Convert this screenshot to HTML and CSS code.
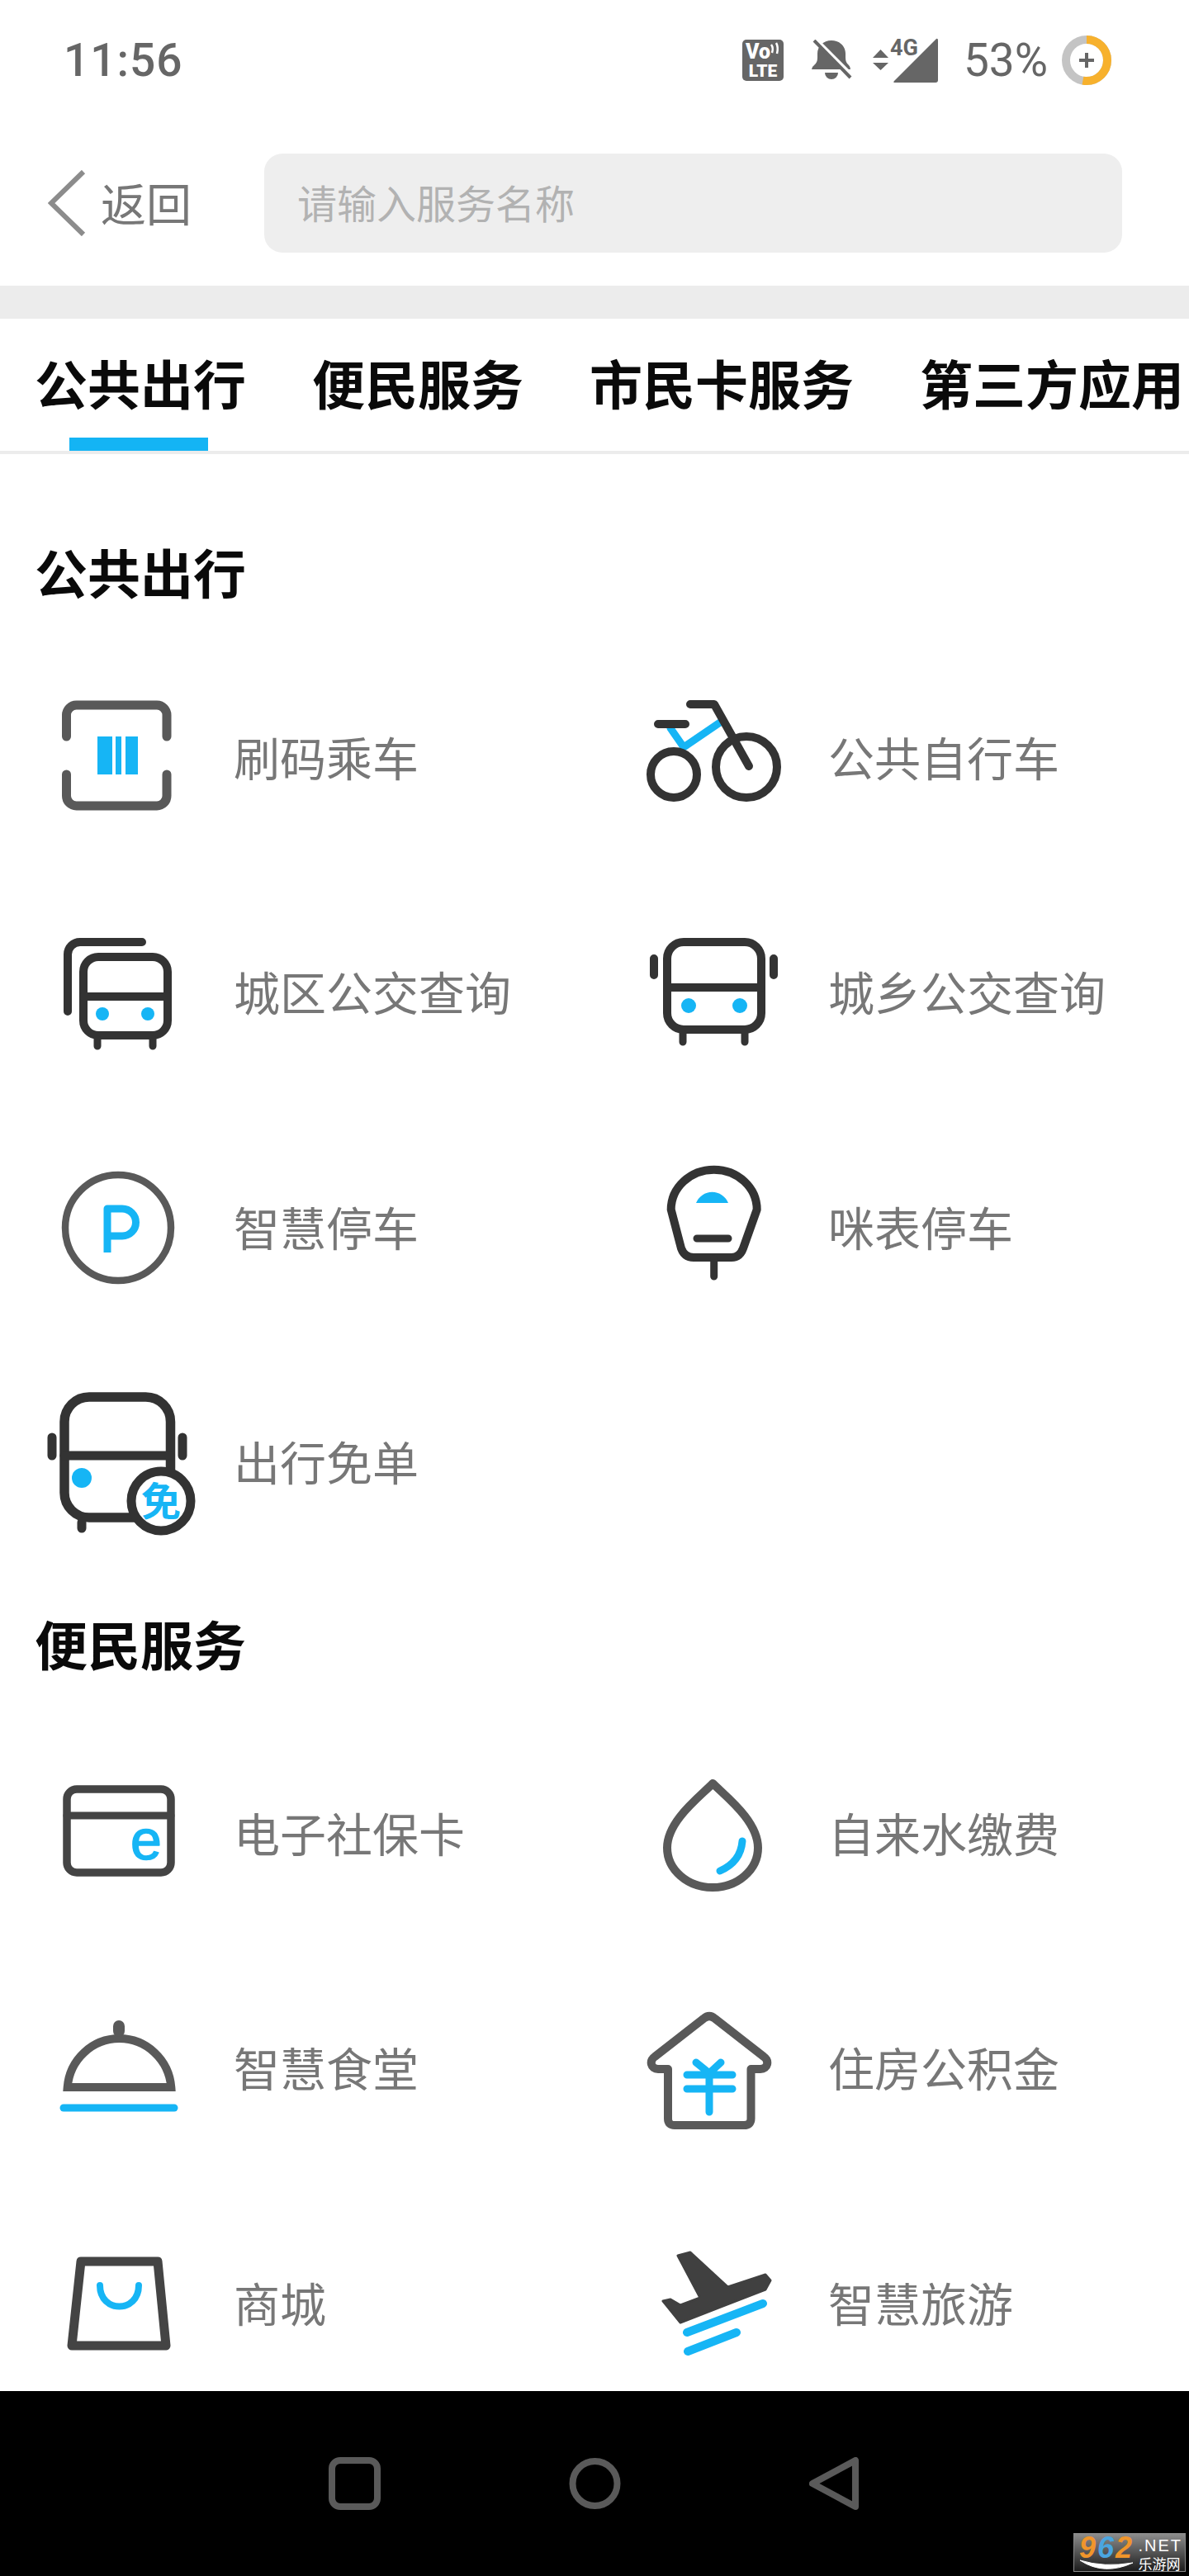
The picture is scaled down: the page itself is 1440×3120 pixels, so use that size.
FILE: index.html
```html
<!DOCTYPE html>
<html lang="zh-CN">
<head>
<meta charset="utf-8">
<title>服务</title>
<link rel="stylesheet" href="styles.css">
</head>
<body>
<div class="phone">
  <div class="status">
    <span class="clock">11:56</span>
    <div class="status-icons">
      <svg class="si-volte" width="50" height="50" viewBox="0 0 50 50"><rect width="50" height="50" rx="5" fill="#666"/><text x="4" y="23" class="volte-v">Vo</text><path d="M35 6q3 4 1 10M41 4q3 5 1 13" fill="none" stroke="#fff" stroke-width="2.500"/><text x="25" y="45" text-anchor="middle" class="volte-l">LTE</text></svg>
      <svg class="si-bell" width="49" height="50" viewBox="0 0 49 50"><path d="M0 36Q0 33 3 31Q7 28 7 22V17C7 8 14 1 24 1C34 1 41 8 41 17V22Q41 28 45 31Q47 33 47 36Z" fill="#666"/><path d="M16 40H32A8 8 0 0 1 16 40Z" fill="#666"/><path d="M7 1L49 43" stroke="#fff" stroke-width="4"/><path d="M3 1L47 46" stroke="#666" stroke-width="4"/></svg>
      <svg class="si-net" width="79" height="64" viewBox="0 -10 79 64"><path d="M9.500 14L19 24H0Z" fill="#666"/><path d="M0 30H19L9.500 39Z" fill="#666"/><text x="21" y="21" class="net-t">4G</text><path d="M77 1Q79 0 79 3V51Q79 54 76 54H27Q24 54 26 52Z" fill="#666"/></svg>
      <span class="pct">53%</span>
      <svg class="si-ring" width="60" height="60" viewBox="0 0 60 60"><circle cx="30" cy="30" r="25" fill="none" stroke="#c4c4c4" stroke-width="10"/><circle cx="30" cy="30" r="25" fill="none" stroke="#f7b12d" stroke-width="10" pathLength="100" stroke-dasharray="53 47" transform="rotate(-90 30 30)"/><path d="M21 30H39M30 21V39" stroke="#666" stroke-width="4"/></svg>
    </div>
  </div>

  <header class="appbar">
    <div class="back">
      <svg width="46" height="80" viewBox="0 0 46 80"><path d="M43 2L4 40L43 78" fill="none" stroke="#8c8c8c" stroke-width="6"/></svg>
      <span class="lift">返回</span>
    </div>
    <div class="search"><span class="lift">请输入服务名称</span></div>
  </header>
  <div class="band"></div>

  <nav class="tabs">
    <span class="tab active">公共出行</span>
    <span class="tab">便民服务</span>
    <span class="tab">市民卡服务</span>
    <span class="tab">第三方应用</span>
  </nav>

  <main class="main">
    <section>
      <h2 class="title">公共出行</h2>
      <div class="grid">
        <div class="item">
          <svg class="ico c5" viewBox="0 0 190 190"><path d="M36.500 70V44a12 12 0 0 1 12-12H146a12 12 0 0 1 12 12V70M36.500 116V142a12 12 0 0 0 12 12H146a12 12 0 0 0 12-12V116" stroke-width="11"/><path class="bf" d="M74 70h18v46H74zM96 70h7v46h-7zM108 70h15v46h-15z"/></svg>
          <span class="lift">刷码乘车</span>
        </div>
        <div class="item">
          <svg class="ico c3" viewBox="0 0 190 190"><path class="bl" d="M48 60L64 83L108 53"/><circle cx="52" cy="116" r="28"/><circle cx="140" cy="107" r="37"/><path d="M72 31H101L143 106M33 55H66"/></svg>
          <span class="lift">公共自行车</span>
        </div>
        <div class="item">
          <svg class="ico c3" viewBox="0 0 190 190"><path d="M38 118V49a15 15 0 0 1 15-15H128"/><rect x="57" y="52" width="102" height="95" rx="18"/><path d="M57 100H159"/><path d="M74 152V160M141 152V160" stroke-width="9"/><circle class="bf" cx="80" cy="121" r="8"/><circle class="bf" cx="135" cy="121" r="8"/></svg>
          <span class="lift">城区公交查询</span>
        </div>
        <div class="item">
          <svg class="ico c3" viewBox="0 0 190 190"><rect x="44" y="34" width="114" height="106" rx="20"/><path d="M44 89H158M28 54V74M173 54V74"/><path d="M63 145V155M138 145V155" stroke-width="9"/><circle class="bf" cx="70" cy="111" r="9"/><circle class="bf" cx="132" cy="111" r="9"/></svg>
          <span class="lift">城乡公交查询</span>
        </div>
        <div class="item">
          <svg class="ico c5" viewBox="0 0 190 190"><circle cx="99" cy="96" r="64" stroke-width="8.500"/><path class="bl w9" stroke-linecap="butt" stroke-linejoin="round" d="M86 126V73H104a16.500 16.500 0 0 1 0 33H86"/></svg>
          <span class="lift">智慧停车</span>
        </div>
        <div class="item">
          <svg class="ico c3" viewBox="0 0 190 190"><path d="M48.700 74A52 48.300 0 0 1 152.700 74L136 121Q132 132 122 132H76Q65 132 61 121Z"/><path d="M100.700 134V155M80 109H118" stroke-width="9"/><path class="bf" d="M79 66A21 21 0 0 1 118 66Z"/></svg>
          <span class="lift">咪表停车</span>
        </div>
        <div class="item">
          <svg class="ico c3" viewBox="0 0 190 190"><rect x="34" y="16" width="128.500" height="146" rx="30" stroke-width="11.500"/><path d="M34 87H162M19 65V87M177 65V87M55 168V175" stroke-width="11"/><circle class="bf" cx="55" cy="114" r="12"/><circle cx="151" cy="142" r="36" fill="#fff" stroke-width="11"/><text x="151" y="160" text-anchor="middle" class="mian">免</text></svg>
          <span class="lift">出行免单</span>
        </div>
      </div>
    </section>
    <section class="sec2">
      <h2 class="title">便民服务</h2>
      <div class="grid">
        <div class="item">
          <svg class="ico c4" viewBox="0 0 190 190"><rect x="37" y="42" width="126" height="101" rx="12" stroke-width="9.500"/><path d="M37 74H163" stroke-width="9"/><text x="114" y="127" class="e">e</text></svg>
          <span class="lift">电子社保卡</span>
        </div>
        <div class="item">
          <svg class="ico c5" viewBox="0 0 190 190"><path d="M99.300 35C85 50 44 80 44 113A55 48 0 0 0 154 113C154 80 114 50 99.300 35Z"/><path class="bl" d="M135 105Q133 130 108 141"/></svg>
          <span class="lift">自来水缴费</span>
        </div>
        <div class="item">
          <svg class="ico c5" viewBox="0 0 190 190"><path d="M37.700 118A63 64 0 0 1 163.300 118Z" stroke-linejoin="miter"/><path d="M100 44V50" stroke-width="14"/><path class="bl" d="M33 143H167"/></svg>
          <span class="lift">智慧食堂</span>
        </div>
        <div class="item">
          <svg class="ico c5" viewBox="0 0 190 190"><path d="M45 96H33C24 96 22 86 29 81L88 35Q95 29 102 35L161 81C168 86 166 96 157 96H145.500V156Q145.500 164 137 164H53Q45 164 45 156Z"/><path class="bl" d="M68 103H123M68 120H123M95 103V148M79 88L95 101L109 88"/></svg>
          <span class="lift">住房公积金</span>
        </div>
        <div class="item">
          <svg class="ico c4" viewBox="0 0 190 190"><path d="M54 45H147L157 147H43Z" stroke-width="11" stroke-linejoin="round"/><path class="bl w8" d="M77 74C77 108 124 108 124 74"/></svg>
          <span class="lift">商城</span>
        </div>
        <div class="item">
          <svg class="ico c4" viewBox="0 0 190 190"><path class="df" d="M57 38L72 34L117.500 76L163 61L169 68L163 79L60 119L39 93L48 91L60 98L84 89Z"/><path class="bl w10" d="M68 131L160 96M69 154L128 131"/></svg>
          <span class="lift">智慧旅游</span>
        </div>
      </div>
    </section>
  </main>

  <footer class="nav">
    <svg width="63" height="64" viewBox="0 0 63 64"><rect x="4" y="4" width="55" height="56" rx="10" fill="none" stroke="#5a5a5a" stroke-width="8"/></svg>
    <svg width="63" height="64" viewBox="0 0 63 64"><circle cx="31.500" cy="32" r="27" fill="none" stroke="#5a5a5a" stroke-width="8"/></svg>
    <svg width="60" height="64" viewBox="0 0 60 64"><path d="M56 4V60L4 32Z" fill="none" stroke="#5a5a5a" stroke-width="8" stroke-linejoin="round"/></svg>
    <div class="mark">
      <div class="mark-left">
        <div class="mark-num"><span class="m9">9</span><span class="m6">6</span><span class="m9">2</span></div>
        <svg width="66" height="14" viewBox="0 0 66 14"><path d="M1 1Q30 20 65 4Q30 10 1 1Z" fill="#fff" stroke="#fff"/></svg>
      </div>
      <div class="mark-right">
        <div class="mnet">.NET</div>
        <div class="mcn">乐游网</div>
      </div>
    </div>
  </footer>
</div>
</body>
</html>
```
FILE: styles.css
```css
* { box-sizing: border-box; }
html, body { margin: 0; padding: 0; background: #fff; }
.phone {
  width: 1440px;
  height: 3120px;
  display: flex;
  flex-direction: column;
  overflow: hidden;
  font-family: "Noto Sans CJK SC", "Noto Sans", sans-serif;
}
.lift { position: relative; top: -2px; }

/* status bar */
.status {
  height: 146px;
  flex: none;
  display: flex;
  align-items: center;
  justify-content: space-between;
  padding: 0 94px 0 77px;
  color: #666;
  font-family: Roboto, sans-serif;
}
.clock, .pct { font-size: 55px; font-weight: 500; letter-spacing: 1px; }
.status-icons { display: flex; align-items: center; }
.si-bell { margin-left: 34px; }
.si-net { margin-left: 25px; margin-top: -10px; }
.pct { margin-left: 31px; letter-spacing: 0; font-weight: 400; }
.si-ring { margin-left: 17px; }
.volte-v { font: 900 25px Roboto, sans-serif; fill: #fff; }
.volte-l { font: 900 21px Roboto, sans-serif; fill: #fff; }
.net-t { font: 700 27px Roboto, sans-serif; fill: #666; }

/* app bar */
.appbar {
  height: 200px;
  flex: none;
  display: flex;
  align-items: center;
  padding: 0 81px 0 58px;
}
.back {
  width: 262px;
  flex: none;
  display: flex;
  align-items: center;
  gap: 18px;
  font-size: 55px;
  color: #777;
}
.search {
  flex: 1;
  height: 120px;
  border-radius: 22px;
  background: #eee;
  display: flex;
  align-items: center;
  padding-left: 40px;
  font-size: 48px;
  color: #b2b2b2;
}
.band { height: 40px; flex: none; background: #ececec; }

/* tabs */
.tabs {
  height: 164px;
  flex: none;
  display: flex;
  gap: 80px;
  padding-left: 42px;
  border-bottom: 4px solid #ececec;
  white-space: nowrap;
}
.tab {
  position: relative;
  font-size: 64px;
  font-weight: 700;
  line-height: 152px;
  color: #0a0a0a;
}
.tab.active::after {
  content: "";
  position: absolute;
  left: 42px;
  bottom: 0;
  width: 168px;
  height: 16px;
  background: #14b4f4;
}

/* content */
.main { flex: 1; min-height: 0; overflow: hidden; padding-top: 65px; }
.title {
  margin: 0;
  height: 160px;
  padding-left: 42px;
  font-size: 64px;
  font-weight: 700;
  line-height: 152px;
  color: #0a0a0a;
}
.sec2 .title { margin-bottom: 5px; }
.grid {
  display: grid;
  grid-template-columns: 720px 720px;
  grid-auto-rows: 284.5px;
}
.item {
  display: flex;
  align-items: center;
  gap: 49px;
  padding-left: 44px;
  font-size: 56px;
  color: #777;
}
.ico {
  width: 190px;
  height: 190px;
  flex: none;
  overflow: visible;
  fill: none;
  stroke: currentColor;
  stroke-width: 10;
  stroke-linecap: round;
  stroke-linejoin: round;
}
.c3 { color: #333; }
.c4 { color: #444; }
.c5 { color: #595959; }
.ico .bl { stroke: #16b5f5; stroke-width: 9; }
.ico .bl.w8 { stroke-width: 8; }
.ico .bl.w9 { stroke-width: 9; }
.ico .bl.w10 { stroke-width: 10; }
.ico .bf { fill: #16b5f5; stroke: none; }
.ico .df { fill: #404040; stroke: #404040; stroke-width: 3; }
.mian { font: 700 48px "Noto Sans CJK SC", sans-serif; fill: #16b5f5; stroke: none; }
.e { font: 400 68px "Liberation Sans", sans-serif; fill: #16b5f5; stroke: #16b5f5; stroke-width: 1.500; }

/* navigation bar */
.nav {
  position: relative;
  height: 224px;
  flex: none;
  background: #000;
  display: flex;
  align-items: center;
  gap: 228px;
  padding-left: 398px;
}
.mark {
  position: absolute;
  left: 1300px;
  top: 172px;
  width: 136px;
  height: 47px;
  padding: 2px 3px 0 6px;
  border: 1px solid #8a8a8a;
  background: linear-gradient(#8c8c8c, #1c1c1c);
  color: #fff;
  display: flex;
  justify-content: space-between;
}
.mark-left svg { display: block; }
.mark-num {
  font: italic 700 36px/29px "Liberation Sans", sans-serif;
  letter-spacing: 2px;
  white-space: nowrap;
}
.m9 { color: #f0952b; }
.m6 { color: #4aa6e0; }
.mnet {
  font: 400 20px/24px "Liberation Sans", sans-serif;
  letter-spacing: 2px;
  white-space: nowrap;
}
.mcn { font-size: 17px; line-height: 19px; white-space: nowrap; }
```
